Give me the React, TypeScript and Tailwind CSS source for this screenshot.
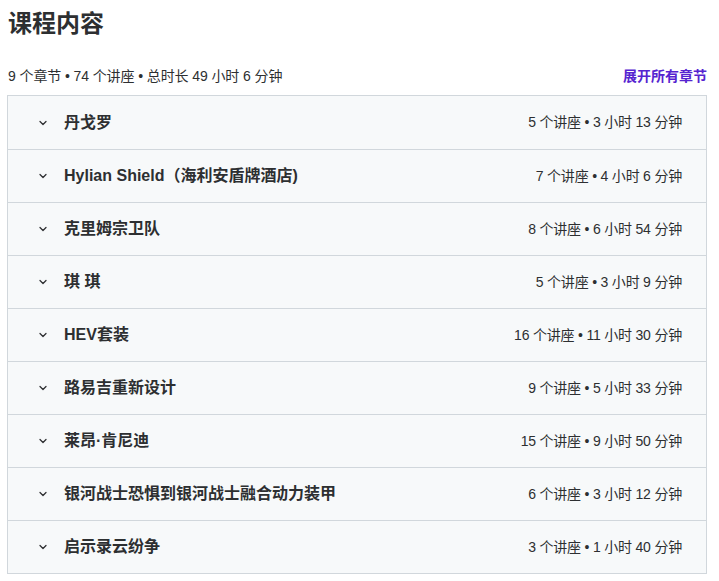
import { ChevronDown } from "lucide-react";

const sections = [
  { title: "丹戈罗", meta: "5 个讲座 • 3 小时 13 分钟" },
  { title: "Hylian Shield（海利安盾牌酒店)", meta: "7 个讲座 • 4 小时 6 分钟" },
  { title: "克里姆宗卫队", meta: "8 个讲座 • 6 小时 54 分钟" },
  { title: "琪 琪", meta: "5 个讲座 • 3 小时 9 分钟" },
  { title: "HEV套装", meta: "16 个讲座 • 11 小时 30 分钟" },
  { title: "路易吉重新设计", meta: "9 个讲座 • 5 小时 33 分钟" },
  { title: "莱昂·肯尼迪", meta: "15 个讲座 • 9 小时 50 分钟" },
  { title: "银河战士恐惧到银河战士融合动力装甲", meta: "6 个讲座 • 3 小时 12 分钟" },
  { title: "启示录云纷争", meta: "3 个讲座 • 1 小时 40 分钟" },
];

export default function App() {
  return (
    <div
      className="w-[719px] h-[581px] bg-white text-[#2d2f31] overflow-hidden"
      style={{ fontFamily: '"Liberation Sans", "Noto Sans CJK SC", sans-serif' }}
    >
      <h2 className="pl-2 pt-[8px] text-[24px] leading-[32px] font-bold">课程内容</h2>

      <div className="flex items-end justify-between pl-2 pr-3 mt-[26px]">
        <span className="text-[14px] leading-[20px] tracking-[-0.1px]">9 个章节 • 74 个讲座 • 总时长 49 小时 6 分钟</span>
        <button className="text-[14px] leading-[20px] font-bold text-[#5624d0]">展开所有章节</button>
      </div>

      <div className="ml-[7px] mr-[12px] mt-[9px] border border-[#d1d7dc]">
        {sections.map((s, i) => (
          <div
            key={i}
            className={`flex items-center justify-between h-[53px] bg-[#f7f9fa] pl-[29px] pr-[24px] ${
              i > 0 ? "border-t border-[#d1d7dc]" : ""
            }`}
          >
            <div className="flex items-center gap-[15px]">
              <ChevronDown className="w-[12px] h-[12px]" strokeWidth={2.5} />
              <span className="text-[16px] font-bold">{s.title}</span>
            </div>
            <span className="text-[14px] tracking-[-0.2px]">{s.meta}</span>
          </div>
        ))}
      </div>
    </div>
  );
}
